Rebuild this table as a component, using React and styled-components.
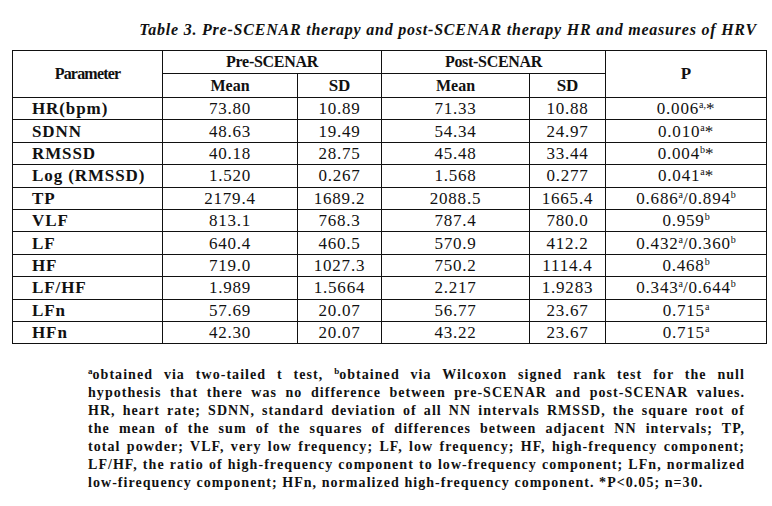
import React from "react";
import styled, { createGlobalStyle } from "styled-components";

const Global = createGlobalStyle`
  html, body { margin: 0; padding: 0; background: #fff; }
  body { font-family: "Liberation Serif", "Times New Roman", serif; color: #111; }
`;

const Page = styled.div`
  width: 772px;
  height: 506px;
  background: #fff;
  padding-top: 20px;
  box-sizing: border-box;
`;

const Title = styled.div`
  font-family: "Liberation Serif", serif;
  font-style: italic;
  font-weight: bold;
  font-size: 16px;
  line-height: 20px;
  text-align: right;
  padding-right: 15px;
  letter-spacing: 0.78px;
  height: 20px;
  margin-bottom: 10px;
  white-space: nowrap;
`;

const Table = styled.table`
  margin-left: 12px;
  border-collapse: collapse;
  table-layout: fixed;
  width: 754px;
  font-family: "Liberation Serif", serif;
`;

const HeadCell = styled.th`
  border: 1.3px solid #111;
  font-weight: bold;
  font-size: ${(p) => (p.$big ? "17px" : "16px")};
  height: ${(p) => p.$h || 22}px;
  padding: 0;
  text-align: center;
  vertical-align: middle;
  line-height: 18px;
  letter-spacing: ${(p) => p.$ls || "0"};
`;

const BodyRow = styled.tr`
  height: 22.4px;
`;

const NameCell = styled.td`
  border: 1.3px solid #111;
  font-weight: bold;
  font-size: 17px;
  letter-spacing: 0.9px;
  padding: 0 0 0 19px;
  height: 21px;
  line-height: 19px;
  text-align: left;
  white-space: nowrap;
`;

const ValueCell = styled.td`
  border: 1.3px solid #111;
  font-size: 17px;
  letter-spacing: 0.8px;
  padding: 0;
  height: 21px;
  line-height: 19px;
  text-align: center;
  white-space: nowrap;
`;

const Sup = styled.sup`
  font-size: 10px;
  line-height: 0;
  vertical-align: 6px;
  letter-spacing: 0;
`;

const Notes = styled.div`
  margin: 22px 27px 0 88px;
  font-family: "Liberation Serif", serif;
  font-weight: bold;
  font-size: 14px;
  line-height: 18px;
  letter-spacing: 1.05px;
`;

const NoteLine = styled.div`
  text-align: justify;
  text-align-last: ${(p) => (p.$last ? "left" : "justify")};
  word-spacing: ${(p) => (p.$last ? "0" : "-1.5px")};
  height: 18px;
`;

const NoteSup = styled.sup`
  font-size: 9px;
  line-height: 0;
  vertical-align: 5px;
  letter-spacing: 0;
`;

const rows = [
  ["HR(bpm)", "73.80", "10.89", "71.33", "10.88", <>0.006<Sup>a,</Sup>*</>],
  ["SDNN", "48.63", "19.49", "54.34", "24.97", <>0.010<Sup>a</Sup>*</>],
  ["RMSSD", "40.18", "28.75", "45.48", "33.44", <>0.004<Sup>b</Sup>*</>],
  ["Log (RMSSD)", "1.520", "0.267", "1.568", "0.277", <>0.041<Sup>a</Sup>*</>],
  ["TP", "2179.4", "1689.2", "2088.5", "1665.4", <>0.686<Sup>a</Sup>/0.894<Sup>b</Sup></>],
  ["VLF", "813.1", "768.3", "787.4", "780.0", <>0.959<Sup>b</Sup></>],
  ["LF", "640.4", "460.5", "570.9", "412.2", <>0.432<Sup>a</Sup>/0.360<Sup>b</Sup></>],
  ["HF", "719.0", "1027.3", "750.2", "1114.4", <>0.468<Sup>b</Sup></>],
  ["LF/HF", "1.989", "1.5664", "2.217", "1.9283", <>0.343<Sup>a</Sup>/0.644<Sup>b</Sup></>],
  ["LFn", "57.69", "20.07", "56.77", "23.67", <>0.715<Sup>a</Sup></>],
  ["HFn", "42.30", "20.07", "43.22", "23.67", <>0.715<Sup>a</Sup></>],
];

const noteLines = [
  <><NoteSup>a</NoteSup>obtained via two-tailed t test, <NoteSup>b</NoteSup>obtained via Wilcoxon signed rank test for the null</>,
  "hypothesis that there was no difference between pre-SCENAR and post-SCENAR values.",
  "HR, heart rate; SDNN, standard deviation of all NN intervals RMSSD, the square root of",
  "the mean of the sum of the squares of differences between adjacent NN intervals; TP,",
  "total powder; VLF, very low frequency; LF, low frequency; HF, high-frequency component;",
  "LF/HF, the ratio of high-frequency component to low-frequency component; LFn, normalized",
  "low-firequency component; HFn, normalized high-frequency component. *P<0.05; n=30.",
];

export default function App() {
  return (
    <Page>
      <Global />
      <Title>Table 3. Pre-SCENAR therapy and post-SCENAR therapy HR and measures of HRV</Title>
      <Table>
        <colgroup>
          <col style={{ width: 150 }} />
          <col style={{ width: 135 }} />
          <col style={{ width: 84 }} />
          <col style={{ width: 148 }} />
          <col style={{ width: 76 }} />
          <col style={{ width: 161 }} />
        </colgroup>
        <thead>
          <tr>
            <HeadCell rowSpan={2} $ls="-0.8px">Parameter</HeadCell>
            <HeadCell colSpan={2} $h={22} $ls="-0.3px">Pre-SCENAR</HeadCell>
            <HeadCell colSpan={2} $h={22} $ls="-0.3px">Post-SCENAR</HeadCell>
            <HeadCell rowSpan={2} $big>P</HeadCell>
          </tr>
          <tr>
            <HeadCell $h={23}>Mean</HeadCell>
            <HeadCell $h={23} $big>SD</HeadCell>
            <HeadCell $h={23}>Mean</HeadCell>
            <HeadCell $h={23} $big>SD</HeadCell>
          </tr>
        </thead>
        <tbody>
          {rows.map((r) => (
            <BodyRow key={r[0]}>
              <NameCell>{r[0]}</NameCell>
              <ValueCell>{r[1]}</ValueCell>
              <ValueCell>{r[2]}</ValueCell>
              <ValueCell>{r[3]}</ValueCell>
              <ValueCell>{r[4]}</ValueCell>
              <ValueCell>{r[5]}</ValueCell>
            </BodyRow>
          ))}
        </tbody>
      </Table>
      <Notes>
        {noteLines.map((line, i) => (
          <NoteLine key={i} $last={i === noteLines.length - 1}>{line}</NoteLine>
        ))}
      </Notes>
    </Page>
  );
}
